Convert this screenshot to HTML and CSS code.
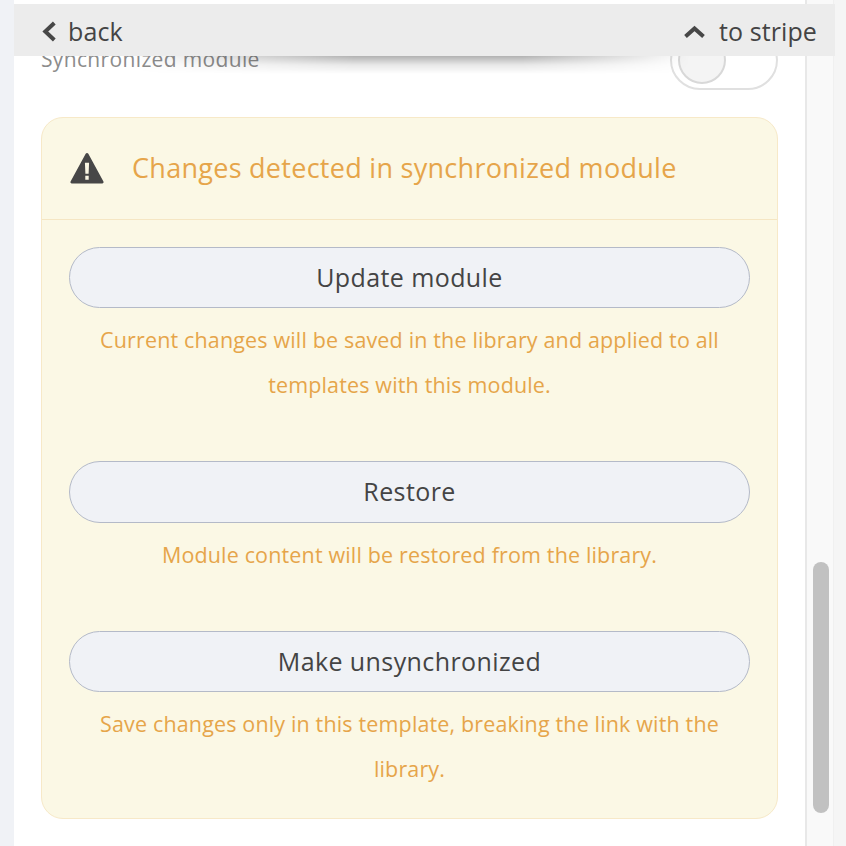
FILE: index.html
```html
<!DOCTYPE html>
<html lang="en">

<head>
  <meta charset="UTF-8">
  <meta name="viewport" content="width=device-width, initial-scale=1.0">
  <title>Synchronized module</title>
  <link rel="stylesheet" href="styles.css">
</head>

<body>
  <div class="layout">
    <main class="panel">
      <div class="sync-row">
        <span class="sync-label">Synchronized module</span>
        <span class="toggle"><span class="toggle-knob"></span></span>
      </div>

      <section class="notice">
        <header class="notice-head">
          <svg class="warn-icon" viewBox="0 0 36 33" aria-hidden="true">
            <path fill="#474747" fill-rule="evenodd" d="M18 0.5c.6 0 1.100.3 1.400.8l16 29.600c.5 1 -.1 2 -1.300 2H1.900c-1.200 0 -1.800 -1 -1.300 -2l16 -29.600c.3 -.5 .8 -.8 1.400 -.8zM15.800 11l.5 11.500h3.400l.5 -11.500zM16.200 24.700v4.300h3.600v-4.300z"/>
          </svg>
          <h2 class="notice-title">Changes detected in synchronized module</h2>
        </header>
        <div class="notice-body">
          <div class="action">
            <button class="action-btn" type="button">Update module</button>
            <p class="action-text">Current changes will be saved in the library and applied to all templates with this module.</p>
          </div>
          <div class="action">
            <button class="action-btn" type="button">Restore</button>
            <p class="action-text">Module content will be restored from the library.</p>
          </div>
          <div class="action">
            <button class="action-btn" type="button">Make unsynchronized</button>
            <p class="action-text">Save changes only in this template, breaking the link with the library.</p>
          </div>
        </div>
      </section>
    </main>

    <div class="scroll-track"><div class="scroll-thumb"></div></div>
    <div class="edge"></div>

    <div class="topbar-shadow"></div>
    <nav class="topbar">
      <a class="topbar-link">
        <svg class="chev-left" viewBox="0 0 14 21" aria-hidden="true">
          <path d="M12.300 2L3.300 10.500l9 8.500" fill="none" stroke="#474747" stroke-width="4"/>
        </svg>
        back
      </a>
      <a class="topbar-link">
        <svg class="chev-up" viewBox="0 0 21 13" aria-hidden="true">
          <path d="M1.500 11.500l9 -8 9 8" fill="none" stroke="#474747" stroke-width="4"/>
        </svg>
        to stripe
      </a>
    </nav>
  </div>
</body>
</html>
```

FILE: styles.css
```css
* {
  box-sizing: border-box;
}

html,
body {
  margin: 0;
  height: 100%;
  overflow: hidden;
}

body {
  background-color: #f0f2f6;
  font-family: "Open Sans", Arial, sans-serif;
  color: #444;
}

.layout {
  display: flex;
  position: relative;
  height: 846px;
  padding-left: 14px;
}

.panel {
  width: 791px;
  padding: 30px 27px 0;
  background-color: #fff;
}

.sync-row {
  display: flex;
  justify-content: space-between;
  align-items: center;
  height: 60px;
}

.sync-label {
  padding-bottom: 3px;
  font-size: 21px;
  letter-spacing: 0.35px;
  color: #8c8c8c;
}

.toggle {
  display: flex;
  align-items: center;
  width: 108px;
  height: 60px;
  padding-left: 6px;
  border: 2px solid #e0e0e0;
  border-radius: 30px;
}

.toggle-knob {
  width: 48px;
  height: 48px;
  border: 2px solid #d8d8d8;
  border-radius: 50%;
  background-color: #f4f4f4;
}

.notice {
  margin-top: 27px;
  height: 702px;
  background-color: #fbf8e5;
  border: 1px solid #f7e9c8;
  border-radius: 22px;
}

.notice-head {
  display: flex;
  align-items: center;
  gap: 27px;
  height: 102px;
  padding: 0 0 2px 28px;
  border-bottom: 1px solid #f5e6c3;
}

.warn-icon {
  width: 34px;
  height: 32px;
  margin-right: 1px;
}

.notice-title {
  margin: 0;
  font-size: 27px;
  font-weight: 400;
  letter-spacing: 0.28px;
  color: #e6a54a;
}

.notice-body {
  display: flex;
  flex-direction: column;
  padding: 27px 27px 0;
}

.action {
  margin-bottom: 54px;
}

.action-btn {
  display: block;
  width: 100%;
  height: 61.300px;
  padding-bottom: 2px;
  background-color: #f0f2f6;
  border: 1px solid #b4bac8;
  border-radius: 31px;
  font-family: inherit;
  font-size: 25px;
  letter-spacing: 0.4px;
  color: #444;
}

.action-text {
  margin: 9px 0 0;
  font-size: 21.500px;
  line-height: 45px;
  letter-spacing: 0.15px;
  text-align: center;
  color: #e6a54a;
}

.scroll-track {
  width: 29px;
  padding: 562px 5px 0 6px;
  background-color: #f9f9f9;
  border-left: 2px solid #e8e8e8;
  border-right: 1px solid #f0f0f0;
}

.scroll-thumb {
  width: 16px;
  height: 251px;
  border-radius: 8px;
  background-color: #c1c1c1;
}

.edge {
  flex: 1;
  background-color: #f5f5f5;
}

.topbar-shadow {
  position: absolute;
  top: 56px;
  left: 130px;
  width: 560px;
  height: 18px;
  background: linear-gradient(rgba(0, 0, 0, 0.3), rgba(0, 0, 0, 0.09) 50%, rgba(0, 0, 0, 0));
  -webkit-mask-image: linear-gradient(90deg, rgba(0, 0, 0, 0), #000 40%, #000 70%, rgba(0, 0, 0, 0));
  mask-image: linear-gradient(90deg, rgba(0, 0, 0, 0), #000 40%, #000 70%, rgba(0, 0, 0, 0));
}

.topbar {
  position: absolute;
  top: 4px;
  left: 14px;
  width: 821px;
  height: 52px;
  display: flex;
  justify-content: space-between;
  align-items: center;
  padding: 2px 18px 0 28px;
  background-color: #ececec;
  font-size: 25px;
  letter-spacing: 0.1px;
}

.topbar-link {
  display: flex;
  align-items: center;
  gap: 12px;
}

.chev-left {
  width: 14px;
  height: 21px;
}

.chev-up {
  width: 21px;
  height: 13px;
  margin-right: 2px;
}
```
